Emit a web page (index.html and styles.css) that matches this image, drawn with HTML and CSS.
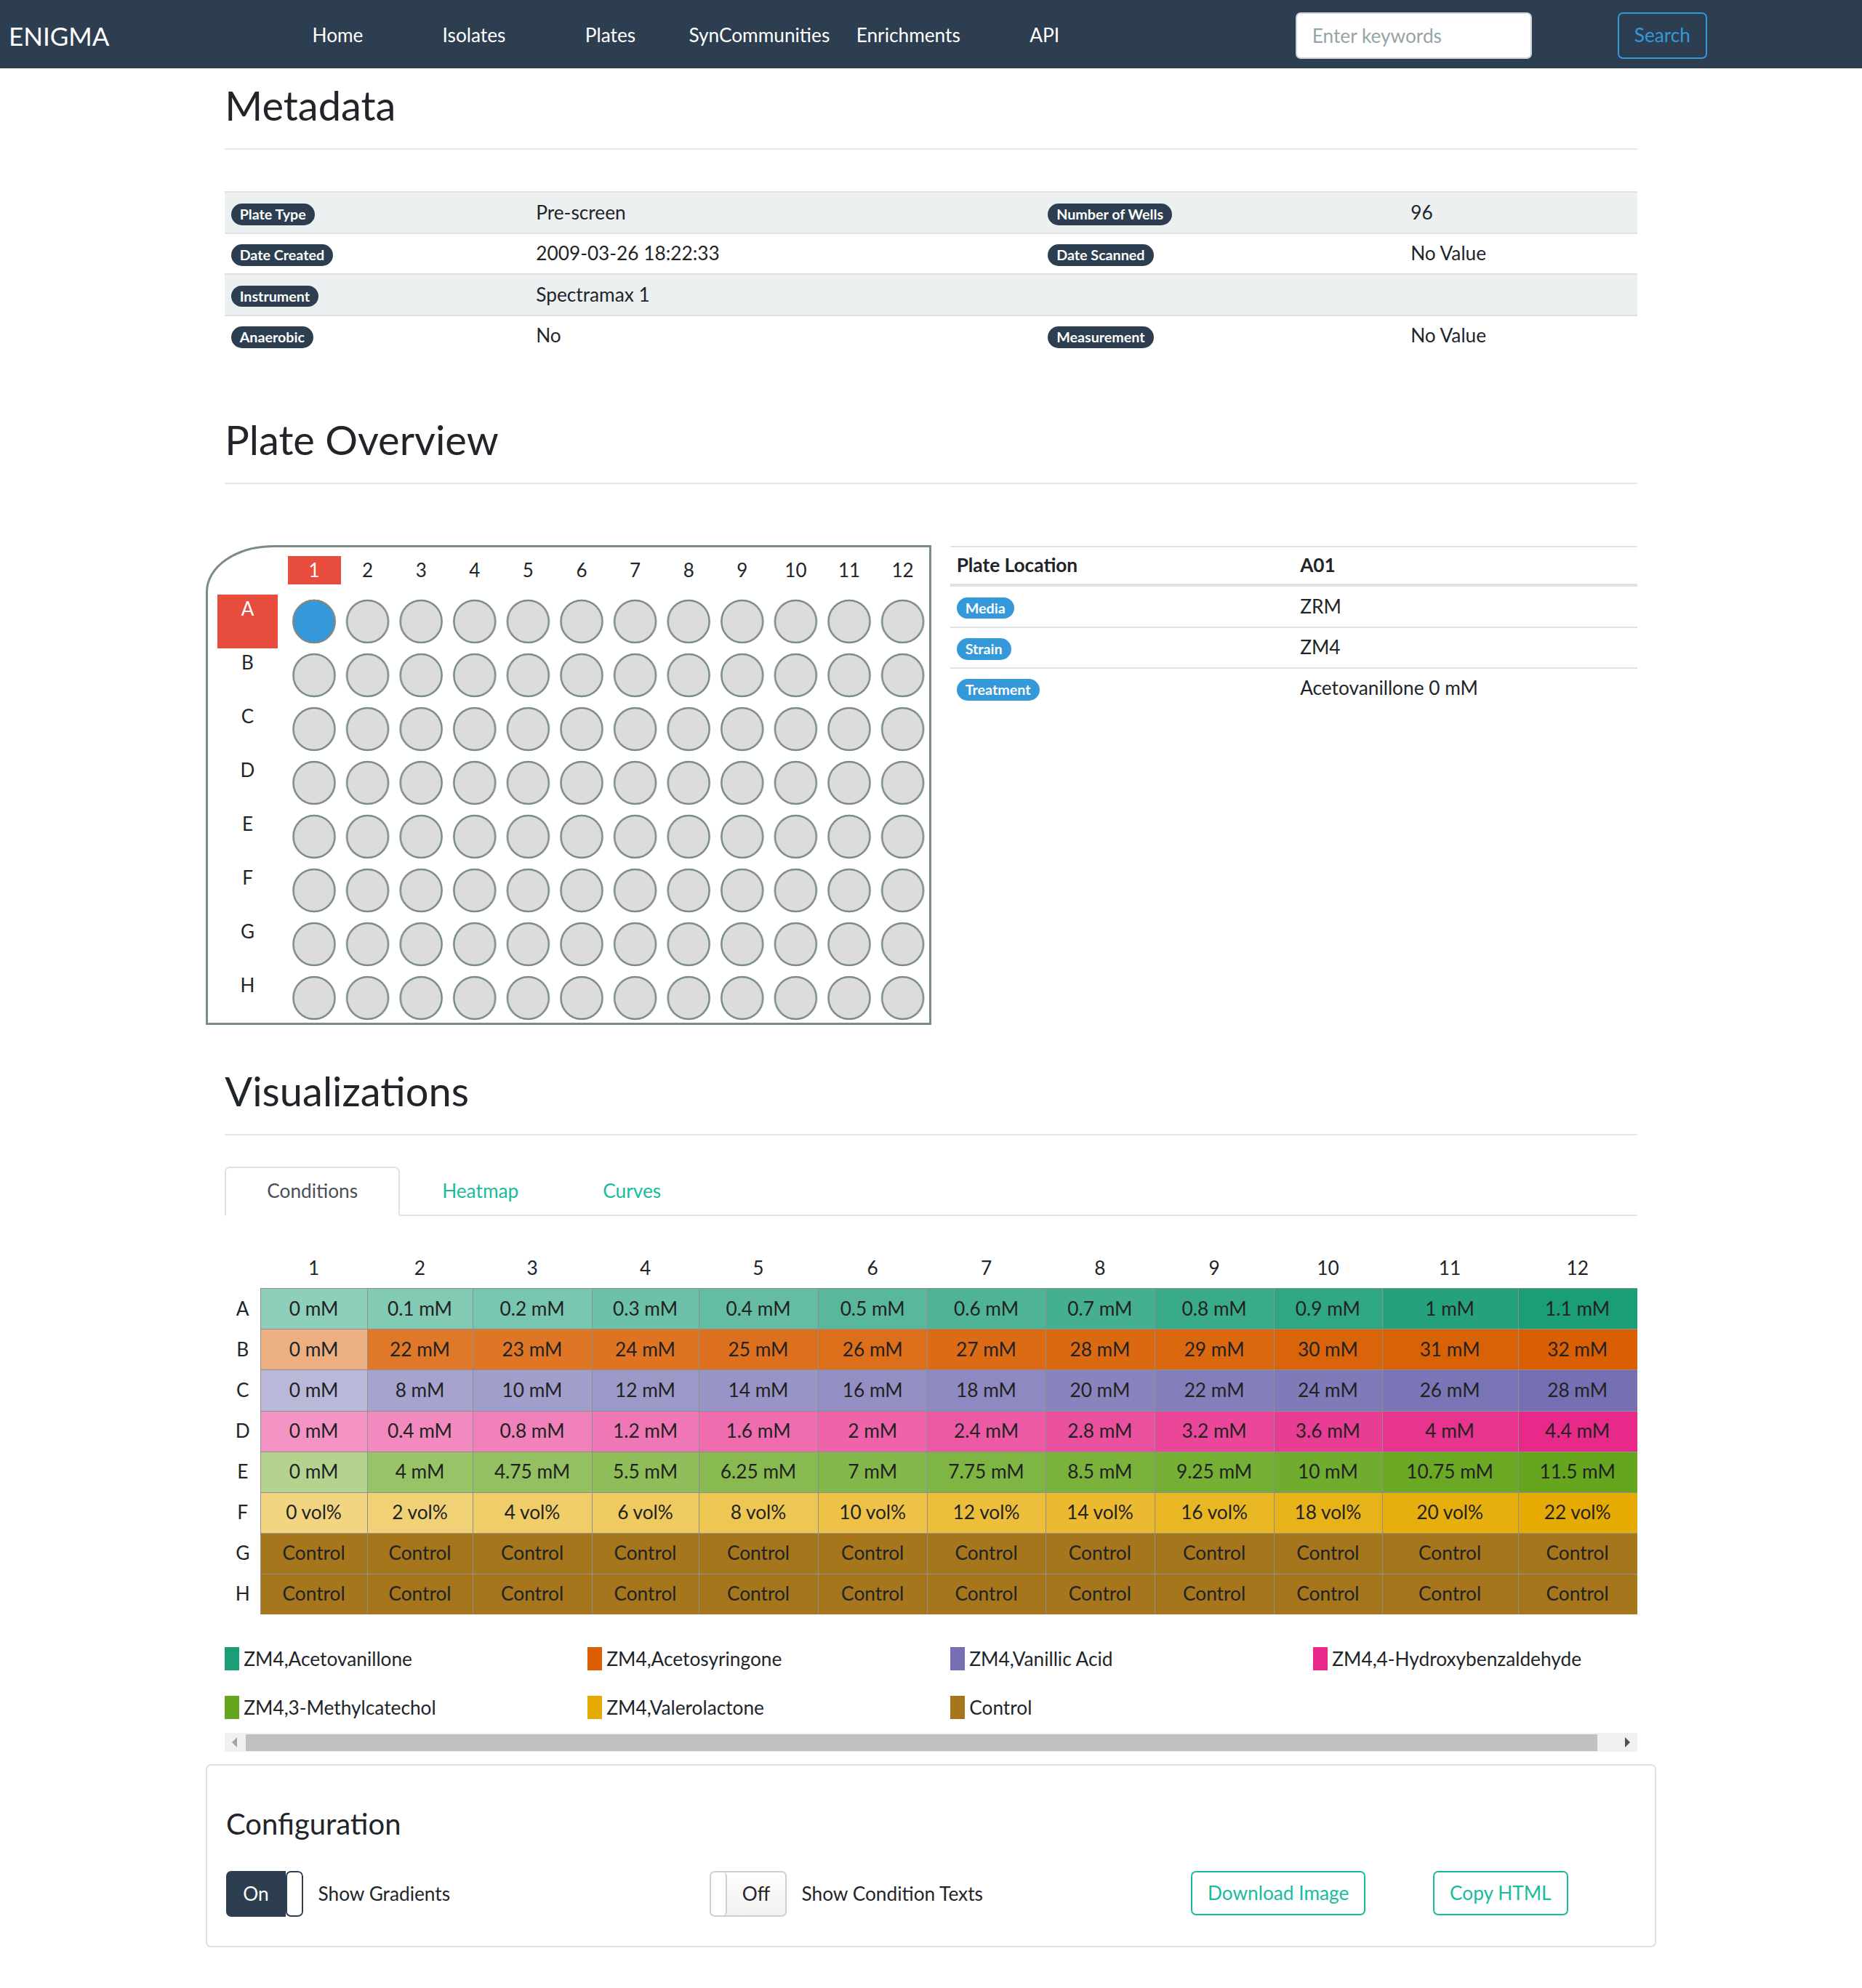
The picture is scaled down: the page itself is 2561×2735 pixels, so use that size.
FILE: index.html
```html
<!DOCTYPE html>
<html lang="en">
<head>
<meta charset="utf-8">
<title>ENIGMA - Plate</title>
<link rel="stylesheet" href="styles.css">
</head>
<body>
<nav class="navbar">
  <a class="brand" href="#">ENIGMA</a>
  <ul class="nav">
    <li><a class="nav-link" href="#">Home</a></li>
    <li><a class="nav-link" href="#">Isolates</a></li>
    <li><a class="nav-link" href="#">Plates</a></li>
    <li><a class="nav-link" href="#">SynCommunities</a></li>
    <li><a class="nav-link" href="#">Enrichments</a></li>
    <li><a class="nav-link" href="#">API</a></li>
  </ul>
  <form class="search">
    <input class="search-input" type="text" placeholder="Enter keywords">
    <button class="btn btn-outline-info" type="button">Search</button>
  </form>
</nav>

<main class="container">
  <section>
    <div class="page-header ph-meta"><h2>Metadata</h2></div>
    <table class="meta-table">
      <colgroup><col class="mc1"><col class="mc2"><col class="mc3"><col class="mc4"></colgroup>
      <tbody>
        <tr class="striped"><td><span class="badge badge-dark">Plate Type</span></td><td>Pre-screen</td><td><span class="badge badge-dark">Number of Wells</span></td><td>96</td></tr>
        <tr><td><span class="badge badge-dark">Date Created</span></td><td>2009-03-26 18:22:33</td><td><span class="badge badge-dark">Date Scanned</span></td><td>No Value</td></tr>
        <tr class="striped"><td><span class="badge badge-dark">Instrument</span></td><td>Spectramax 1</td><td></td><td></td></tr>
        <tr><td><span class="badge badge-dark">Anaerobic</span></td><td>No</td><td><span class="badge badge-dark">Measurement</span></td><td>No Value</td></tr>
      </tbody>
    </table>
  </section>

  <section>
    <div class="page-header ph-plate"><h2>Plate Overview</h2></div>
    <div class="plate-row">
      <div class="plate-col">
        <svg class="plate" width="998" height="660" viewBox="0 0 998 660" xmlns="http://www.w3.org/2000/svg">
          <defs>
            <pattern id="well" x="112.2" y="68" width="73.6" height="74" patternUnits="userSpaceOnUse">
              <ellipse cx="36.8" cy="37" rx="28.5" ry="29" fill="#dcdcdc" stroke="#7b8a8b" stroke-width="2.5"/>
            </pattern>
          </defs>
          <rect x="113" y="15" width="73" height="39" fill="#e74c3c"/>
          <rect x="16" y="68" width="83" height="74" fill="#e74c3c"/>
          <g class="plate-text" text-anchor="middle">
            <text class="on-red" x="149" y="44">1</text>
            <text x="222.6" y="44">2</text>
            <text x="296.2" y="44">3</text>
            <text x="369.8" y="44">4</text>
            <text x="443.4" y="44">5</text>
            <text x="517" y="44">6</text>
            <text x="590.6" y="44">7</text>
            <text x="664.2" y="44">8</text>
            <text x="737.8" y="44">9</text>
            <text x="811.4" y="44">10</text>
            <text x="885" y="44">11</text>
            <text x="958.6" y="44">12</text>
            <text class="on-red" x="57.5" y="97">A</text>
            <text x="57.5" y="171">B</text>
            <text x="57.5" y="245">C</text>
            <text x="57.5" y="319">D</text>
            <text x="57.5" y="393">E</text>
            <text x="57.5" y="467">F</text>
            <text x="57.5" y="541">G</text>
            <text x="57.5" y="615">H</text>
          </g>
          <rect x="112.2" y="68" width="883.2" height="592" fill="url(#well)"/>
          <ellipse cx="149" cy="105" rx="28.5" ry="29" fill="#3498db" stroke="#7b8a8b" stroke-width="2.5"/>
          <path d="M93 1.5 H996.5 V658.5 H1.5 V64 A91.5 62.5 0 0 1 93 1.5 Z" fill="none" stroke="#7b8a8b" stroke-width="3"/>
        </svg>
      </div>
      <div class="info-col">
        <table class="info-table">
          <thead><tr><th>Plate Location</th><th>A01</th></tr></thead>
          <tbody>
            <tr><td><span class="badge badge-info">Media</span></td><td>ZRM</td></tr>
            <tr><td><span class="badge badge-info">Strain</span></td><td>ZM4</td></tr>
            <tr><td><span class="badge badge-info">Treatment</span></td><td>Acetovanillone 0 mM</td></tr>
          </tbody>
        </table>
      </div>
    </div>
  </section>

  <section>
    <div class="page-header ph-viz"><h2>Visualizations</h2></div>
    <ul class="tabs">
      <li class="tab active">Conditions</li>
      <li class="tab">Heatmap</li>
      <li class="tab">Curves</li>
    </ul>
    <div class="viz-scroll">
      <div class="cond">
        <div class="ch"></div>
        <div class="ch">1</div><div class="ch">2</div><div class="ch">3</div><div class="ch">4</div><div class="ch">5</div><div class="ch">6</div>
        <div class="ch">7</div><div class="ch">8</div><div class="ch">9</div><div class="ch">10</div><div class="ch">11</div><div class="ch">12</div>

        <div class="cond-row r-a">
          <div class="rl">A</div>
          <div class="c" style="--p:50%">0 mM</div>
          <div class="c" style="--p:54.5%">0.1 mM</div>
          <div class="c" style="--p:59.1%">0.2 mM</div>
          <div class="c" style="--p:63.6%">0.3 mM</div>
          <div class="c" style="--p:68.2%">0.4 mM</div>
          <div class="c" style="--p:72.7%">0.5 mM</div>
          <div class="c" style="--p:77.3%">0.6 mM</div>
          <div class="c" style="--p:81.8%">0.7 mM</div>
          <div class="c" style="--p:86.4%">0.8 mM</div>
          <div class="c" style="--p:90.9%">0.9 mM</div>
          <div class="c" style="--p:95.5%">1 mM</div>
          <div class="c" style="--p:100%">1.1 mM</div>
        </div>
        <div class="cond-row r-b">
          <div class="rl">B</div>
          <div class="c" style="--p:50%">0 mM</div>
          <div class="c" style="--p:84.4%">22 mM</div>
          <div class="c" style="--p:85.9%">23 mM</div>
          <div class="c" style="--p:87.5%">24 mM</div>
          <div class="c" style="--p:89.1%">25 mM</div>
          <div class="c" style="--p:90.6%">26 mM</div>
          <div class="c" style="--p:92.2%">27 mM</div>
          <div class="c" style="--p:93.8%">28 mM</div>
          <div class="c" style="--p:95.3%">29 mM</div>
          <div class="c" style="--p:96.9%">30 mM</div>
          <div class="c" style="--p:98.4%">31 mM</div>
          <div class="c" style="--p:100%">32 mM</div>
        </div>
        <div class="cond-row r-c">
          <div class="rl">C</div>
          <div class="c" style="--p:50%">0 mM</div>
          <div class="c" style="--p:64.3%">8 mM</div>
          <div class="c" style="--p:67.9%">10 mM</div>
          <div class="c" style="--p:71.4%">12 mM</div>
          <div class="c" style="--p:75%">14 mM</div>
          <div class="c" style="--p:78.6%">16 mM</div>
          <div class="c" style="--p:82.1%">18 mM</div>
          <div class="c" style="--p:85.7%">20 mM</div>
          <div class="c" style="--p:89.3%">22 mM</div>
          <div class="c" style="--p:92.9%">24 mM</div>
          <div class="c" style="--p:96.4%">26 mM</div>
          <div class="c" style="--p:100%">28 mM</div>
        </div>
        <div class="cond-row r-d">
          <div class="rl">D</div>
          <div class="c" style="--p:50%">0 mM</div>
          <div class="c" style="--p:54.5%">0.4 mM</div>
          <div class="c" style="--p:59.1%">0.8 mM</div>
          <div class="c" style="--p:63.6%">1.2 mM</div>
          <div class="c" style="--p:68.2%">1.6 mM</div>
          <div class="c" style="--p:72.7%">2 mM</div>
          <div class="c" style="--p:77.3%">2.4 mM</div>
          <div class="c" style="--p:81.8%">2.8 mM</div>
          <div class="c" style="--p:86.4%">3.2 mM</div>
          <div class="c" style="--p:90.9%">3.6 mM</div>
          <div class="c" style="--p:95.5%">4 mM</div>
          <div class="c" style="--p:100%">4.4 mM</div>
        </div>
        <div class="cond-row r-e">
          <div class="rl">E</div>
          <div class="c" style="--p:50%">0 mM</div>
          <div class="c" style="--p:67.4%">4 mM</div>
          <div class="c" style="--p:70.7%">4.75 mM</div>
          <div class="c" style="--p:73.9%">5.5 mM</div>
          <div class="c" style="--p:77.2%">6.25 mM</div>
          <div class="c" style="--p:80.4%">7 mM</div>
          <div class="c" style="--p:83.7%">7.75 mM</div>
          <div class="c" style="--p:87%">8.5 mM</div>
          <div class="c" style="--p:90.2%">9.25 mM</div>
          <div class="c" style="--p:93.5%">10 mM</div>
          <div class="c" style="--p:96.7%">10.75 mM</div>
          <div class="c" style="--p:100%">11.5 mM</div>
        </div>
        <div class="cond-row r-f">
          <div class="rl">F</div>
          <div class="c" style="--p:50%">0 vol%</div>
          <div class="c" style="--p:54.5%">2 vol%</div>
          <div class="c" style="--p:59.1%">4 vol%</div>
          <div class="c" style="--p:63.6%">6 vol%</div>
          <div class="c" style="--p:68.2%">8 vol%</div>
          <div class="c" style="--p:72.7%">10 vol%</div>
          <div class="c" style="--p:77.3%">12 vol%</div>
          <div class="c" style="--p:81.8%">14 vol%</div>
          <div class="c" style="--p:86.4%">16 vol%</div>
          <div class="c" style="--p:90.9%">18 vol%</div>
          <div class="c" style="--p:95.5%">20 vol%</div>
          <div class="c" style="--p:100%">22 vol%</div>
        </div>
        <div class="cond-row r-g">
          <div class="rl">G</div>
          <div class="c">Control</div><div class="c">Control</div><div class="c">Control</div><div class="c">Control</div>
          <div class="c">Control</div><div class="c">Control</div><div class="c">Control</div><div class="c">Control</div>
          <div class="c">Control</div><div class="c">Control</div><div class="c">Control</div><div class="c">Control</div>
        </div>
        <div class="cond-row r-g">
          <div class="rl">H</div>
          <div class="c">Control</div><div class="c">Control</div><div class="c">Control</div><div class="c">Control</div>
          <div class="c">Control</div><div class="c">Control</div><div class="c">Control</div><div class="c">Control</div>
          <div class="c">Control</div><div class="c">Control</div><div class="c">Control</div><div class="c">Control</div>
        </div>
      </div>

      <div class="legend">
        <div class="legend-item"><span class="swatch sw-a"></span>ZM4,Acetovanillone</div>
        <div class="legend-item"><span class="swatch sw-b"></span>ZM4,Acetosyringone</div>
        <div class="legend-item"><span class="swatch sw-c"></span>ZM4,Vanillic Acid</div>
        <div class="legend-item"><span class="swatch sw-d"></span>ZM4,4-Hydroxybenzaldehyde</div>
        <div class="legend-item"><span class="swatch sw-e"></span>ZM4,3-Methylcatechol</div>
        <div class="legend-item"><span class="swatch sw-f"></span>ZM4,Valerolactone</div>
        <div class="legend-item"><span class="swatch sw-g"></span>Control</div>
      </div>
    </div>
    <div class="scrollbar" aria-hidden="true">
      <span class="sb-btn"><span class="sb-arrow sb-arrow-left"></span></span>
      <span class="sb-track"><span class="sb-thumb"></span></span>
      <span class="sb-btn"><span class="sb-arrow sb-arrow-right"></span></span>
    </div>

    <div class="card">
      <h4>Configuration</h4>
      <div class="config-row">
        <div class="config-item">
          <div class="toggle on"><span class="toggle-on">On</span><span class="toggle-handle"></span></div>
          <span class="toggle-label">Show Gradients</span>
        </div>
        <div class="config-item">
          <div class="toggle off"><span class="toggle-handle"></span><span class="toggle-off">Off</span></div>
          <span class="toggle-label">Show Condition Texts</span>
        </div>
        <div class="config-btn"><button class="btn btn-outline-success" type="button">Download Image</button></div>
        <div class="config-btn"><button class="btn btn-outline-success" type="button">Copy HTML</button></div>
      </div>
    </div>
  </section>
</main>
</body>
</html>
```
FILE: styles.css
```css
* { box-sizing: border-box; }
html, body { margin: 0; padding: 0; }
body {
  font-family: Lato, "Open Sans", "Liberation Sans", sans-serif;
  font-size: 26.25px;
  line-height: 1.5;
  color: #212529;
  background: #fff;
}

/* Navbar */
.navbar {
  display: flex;
  align-items: center;
  height: 94px;
  background: #2c3e50;
  padding: 4px 213px 0 12px;
}
.brand {
  flex: 0 0 358.75px;
  color: #fff;
  font-size: 35px;
  line-height: 1.5;
  text-decoration: none;
}
.nav { display: flex; list-style: none; margin: 0; padding: 0; }
.nav-link {
  display: block;
  min-width: 187.5px;
  padding: 0 14.25px;
  text-align: center;
  color: #fff;
  text-decoration: none;
}
.search { margin-left: auto; display: flex; align-items: center; gap: 118px; }
.search-input {
  width: 325px;
  height: 64px;
  padding: 0 21px;
  font: inherit;
  color: #2c3e50;
  background: #fff;
  border: 2px solid #ced4da;
  border-radius: 7px;
}
.search-input::placeholder { color: #95a5a6; }
.btn {
  display: inline-block;
  font: inherit;
  line-height: 1.5;
  padding: 10px 21px;
  background: transparent;
  border: 2px solid;
  border-radius: 7px;
  cursor: pointer;
}
.btn-outline-info { color: #3498db; border-color: #3498db; }
.btn-outline-success { color: #18bc9c; border-color: #18bc9c; padding: 9px 21px; }

/* Container and headers */
.container { width: 1995px; margin: 0 auto; padding: 0 26.25px; }
.page-header { padding-bottom: 26px; border-bottom: 2px solid #e6e6e6; }
.page-header h2 { margin: 0; font-size: 56px; font-weight: 400; line-height: 1.2; }
.ph-meta { margin-top: 16.5px; }
.ph-plate { margin-top: 81.8px; }
.ph-viz { margin-top: 57.2px; }

/* Badges */
.badge {
  display: inline-block;
  padding: 5px 12px;
  font-size: 19.7px;
  font-weight: 700;
  line-height: 1;
  color: #fff;
  border-radius: 20px;
  white-space: nowrap;
}
.badge-dark { background: #2c3e50; }
.badge-info { background: #3498db; }

/* Metadata table */
.meta-table {
  width: 100%;
  margin-top: 57.7px;
  border-collapse: collapse;
  table-layout: fixed;
}
.mc1 { width: 419.6px; }
.mc2 { width: 704px; }
.mc3 { width: 499px; }
.meta-table td { padding: 7.5px 8.4px; border-top: 2px solid #dee2e6; }
.meta-table .striped td { background: #ecf0f1; }

/* Plate overview */
.plate-row { display: flex; margin: 84px -26.25px 0; }
.plate-col { flex: 0 0 50%; }
.info-col { flex: 0 0 50%; padding: 0 26.25px; }
.plate { display: block; }
.plate-text text { font-family: Lato, sans-serif; font-size: 26px; fill: #212529; }
.plate-text text.on-red { fill: #fff; }
.info-table {
  width: 100%;
  margin-top: 1px;
  border-collapse: collapse;
  table-layout: fixed;
}
.info-table th {
  text-align: left;
  font-weight: 700;
  padding: 5.5px 8.4px;
  border-top: 2px solid #dee2e6;
  border-bottom: 4px solid #dee2e6;
}
.info-table td { padding: 7.5px 8.4px; border-top: 2px solid #dee2e6; }

/* Tabs */
.tabs {
  display: flex;
  list-style: none;
  margin: 42.6px 0 0;
  padding: 0;
  border-bottom: 2px solid #dee2e6;
}
.tab {
  padding: 12.5px 56px;
  margin-bottom: -2px;
  border: 2px solid transparent;
  border-radius: 7px 7px 0 0;
  color: #18bc9c;
}
.tab.active { color: #495057; background: #fff; border-color: #dee2e6 #dee2e6 #fff; }

/* Conditions grid */
.viz-scroll { margin-top: 43px; padding-bottom: 19px; overflow: hidden; }
.cond {
  display: grid;
  grid-template-columns: 49px 84fr 83fr 94fr 84fr 94fr 86fr 93fr 86fr 94fr 85fr 107fr 94fr;
  width: 100%;
}
.ch { height: 56px; display: flex; align-items: center; justify-content: center; }
.cond-row { display: contents; }
.rl { height: 56.125px; display: flex; align-items: center; justify-content: center; }
.c {
  height: 56.125px;
  display: flex;
  align-items: center;
  justify-content: center;
  white-space: nowrap;
  color: #222;
  background: color-mix(in srgb, var(--c) var(--p, 100%), #fff);
  box-shadow: inset 1px 1px 0 #8f8f8f;
}
.r-a { --c: #1b9e77; }
.r-b { --c: #d95f02; }
.r-c { --c: #7570b3; }
.r-d { --c: #e7298a; }
.r-e { --c: #66a61e; }
.r-f { --c: #e6ab02; }
.r-g { --c: #a6761d; }

/* Legend */
.legend {
  display: grid;
  grid-template-columns: repeat(3, 499px) 473px;
  row-gap: 35px;
  width: 1970px;
  margin-top: 45px;
}
.legend-item { display: flex; align-items: center; height: 32px; white-space: nowrap; }
.swatch { flex: 0 0 20px; height: 32px; margin-right: 6px; }
.sw-a { background: #1b9e77; }
.sw-b { background: #d95f02; }
.sw-c { background: #7570b3; }
.sw-d { background: #e7298a; }
.sw-e { background: #66a61e; }
.sw-f { background: #e6ab02; }
.sw-g { background: #a6761d; }

/* Horizontal scrollbar of the visualization area */
.scrollbar { display: flex; height: 26px; background: #f1f1f1; }
.sb-btn { flex: 0 0 26px; display: flex; align-items: center; justify-content: center; }
.sb-arrow { width: 0; height: 0; border-top: 7px solid transparent; border-bottom: 7px solid transparent; }
.sb-arrow-left { border-right: 7px solid #a3a3a3; }
.sb-arrow-right { border-left: 7px solid #505050; }
.sb-track { flex: 1; display: flex; align-items: center; padding-left: 3px; }
.sb-thumb { width: 1859px; height: 23px; background: #c1c1c1; }

/* Configuration card */
.card {
  margin: 17px -26.25px 50px;
  padding: 55.5px 26px 40px;
  border: 2px solid #dee2e6;
  border-radius: 7px;
}
.card h4 { margin: 0; font-size: 40px; font-weight: 400; line-height: 1.2; }
.config-row {
  display: grid;
  grid-template-columns: 665px 662px 333px 1fr;
  align-items: start;
  margin-top: 41px;
}
.config-item { display: flex; align-items: center; gap: 20.5px; }
.toggle { display: flex; width: 106px; height: 63px; border-radius: 7px; overflow: hidden; }
.toggle-on {
  flex: 1;
  display: flex;
  align-items: center;
  justify-content: center;
  color: #fff;
  background: #2c3e50;
}
.toggle.on .toggle-handle {
  flex: 0 0 24px;
  background: #fff;
  border: 2px solid #2c3e50;
  border-radius: 7px;
}
.toggle.off { border: 2px solid #cfcfcf; background: linear-gradient(#fff, #f0f0f0); }
.toggle.off .toggle-handle {
  flex: 0 0 22px;
  background: #fff;
  border-right: 2px solid #cfcfcf;
  border-radius: 5px;
}
.toggle-off { flex: 1; display: flex; align-items: center; justify-content: center; color: #212529; }
```
